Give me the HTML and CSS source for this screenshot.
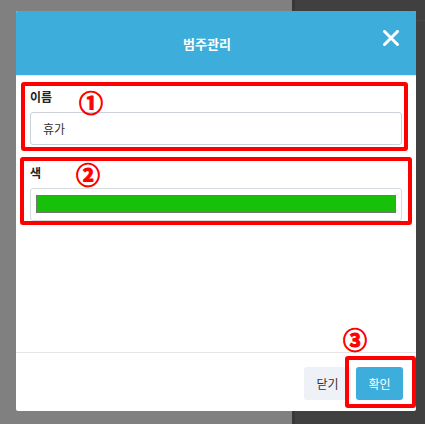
FILE: index.html
```html
<!DOCTYPE html>
<html lang="ko">
<head>
<meta charset="utf-8">
<link rel="stylesheet" href="styles.css">
</head>
<body>
<div class="page-left"></div>
<div class="page-right"><div class="page-right-bar"></div></div>

<div class="modal">
  <div class="modal-header">
    <div class="modal-title">범주관리</div>
    <button class="close-btn" aria-label="닫기">
      <svg width="16" height="16" viewBox="0 0 16 16"><path d="M1.5 1.5 L14.5 14.5 M14.5 1.5 L1.5 14.5" stroke="#fff" stroke-width="3" stroke-linecap="square" fill="none"/></svg>
    </button>
  </div>
  <div class="modal-body">
    <div class="field">
      <label class="field-label">이름</label>
      <div class="text-input">휴가</div>
    </div>
    <div class="field">
      <label class="field-label">색</label>
      <div class="color-input"><div class="color-swatch"></div></div>
    </div>
  </div>
  <div class="modal-footer">
    <button class="btn btn-default">닫기</button>
    <button class="btn btn-primary">확인</button>
  </div>
</div>

<div class="mark mark-1"></div>
<div class="mark mark-2"></div>
<div class="mark mark-3"></div>
<div class="num num-1">①</div>
<div class="num num-2">②</div>
<div class="num num-3">③</div>
</body>
</html>
```
FILE: styles.css
```css
* { box-sizing: border-box; }
html, body { margin: 0; padding: 0; }
body {
  width: 425px;
  height: 424px;
  overflow: hidden;
  display: flex;
  position: relative;
  font-family: "Noto Sans CJK KR", "Noto Sans", sans-serif;
}
.page-left { flex: 0 0 292px; background: #808080; }
.page-right {
  flex: 1;
  background: #404040;
  border-left: 3px solid #383838;
}
.page-right-bar { height: 21px; border-bottom: 1px solid #4a4a4a; }

.modal {
  position: absolute;
  left: 16px;
  top: 11px;
  width: 400px;
  height: 400px;
  background: #fff;
  border-radius: 2px;
  overflow: hidden;
  display: flex;
  flex-direction: column;
}
.modal-header {
  height: 65px;
  background: #3daedb;
  border-bottom: 1px solid #e6e9ec;
  display: flex;
  align-items: center;
  padding: 0 17px 0 15px;
}
.modal-title {
  flex: 1;
  text-align: center;
  color: #fff;
  font-size: 13px;
  font-weight: 700;
  line-height: 18px;
  margin-top: 1px;
}
.close-btn {
  width: 16px;
  height: 16px;
  padding: 0;
  border: 0;
  background: none;
  display: block;
  margin-top: -11px;
}
.close-btn svg { display: block; }

.modal-body {
  flex: 1;
  padding: 12px 14px 0;
  display: flex;
  flex-direction: column;
  gap: 19px;
}
.field { display: flex; flex-direction: column; }
.field-label {
  font-size: 12px;
  font-weight: 700;
  line-height: 17px;
  color: #222;
  margin-bottom: 7px;
}
.text-input {
  height: 33px;
  border: 1px solid #ccd2d8;
  border-radius: 3px;
  padding: 0 12px;
  font-size: 12px;
  line-height: 31px;
  color: #333;
}
.color-input {
  height: 33px;
  border: 1px solid #d5dadf;
  border-radius: 3px;
  padding: 6px 5px 7px;
}
.color-swatch {
  height: 18px;
  background: #17c10a;
  border: 1px solid #767676;
}

.modal-footer {
  border-top: 1px solid #e5e5e5;
  padding: 14px 13px 11px;
  display: flex;
  justify-content: flex-end;
  gap: 5px;
}
.btn {
  height: 33px;
  width: 47px;
  padding: 0;
  border: 0;
  border-radius: 3px;
  font-family: inherit;
  font-size: 12px;
  line-height: 33px;
}
.btn-default { background: #eef2f6; color: #333; }
.btn-primary { background: #3daedb; color: #fff; }

.mark {
  position: absolute;
  border: 4px solid #ff0000;
  border-radius: 3px;
}
.mark-1 { left: 21px; top: 82px; width: 387px; height: 69px; }
.mark-2 { left: 20px; top: 157px; width: 392px; height: 68px; }
.mark-3 { left: 345px; top: 356px; width: 71px; height: 52px; }

.num {
  position: absolute;
  color: #ff0000;
  font-size: 24px;
  font-weight: 700;
  line-height: 1;
  -webkit-text-stroke: 1px #ff0000;
}
.num-1 { left: 79px; top: 90px; }
.num-2 { left: 76px; top: 162px; }
.num-3 { left: 343px; top: 327px; }
```
